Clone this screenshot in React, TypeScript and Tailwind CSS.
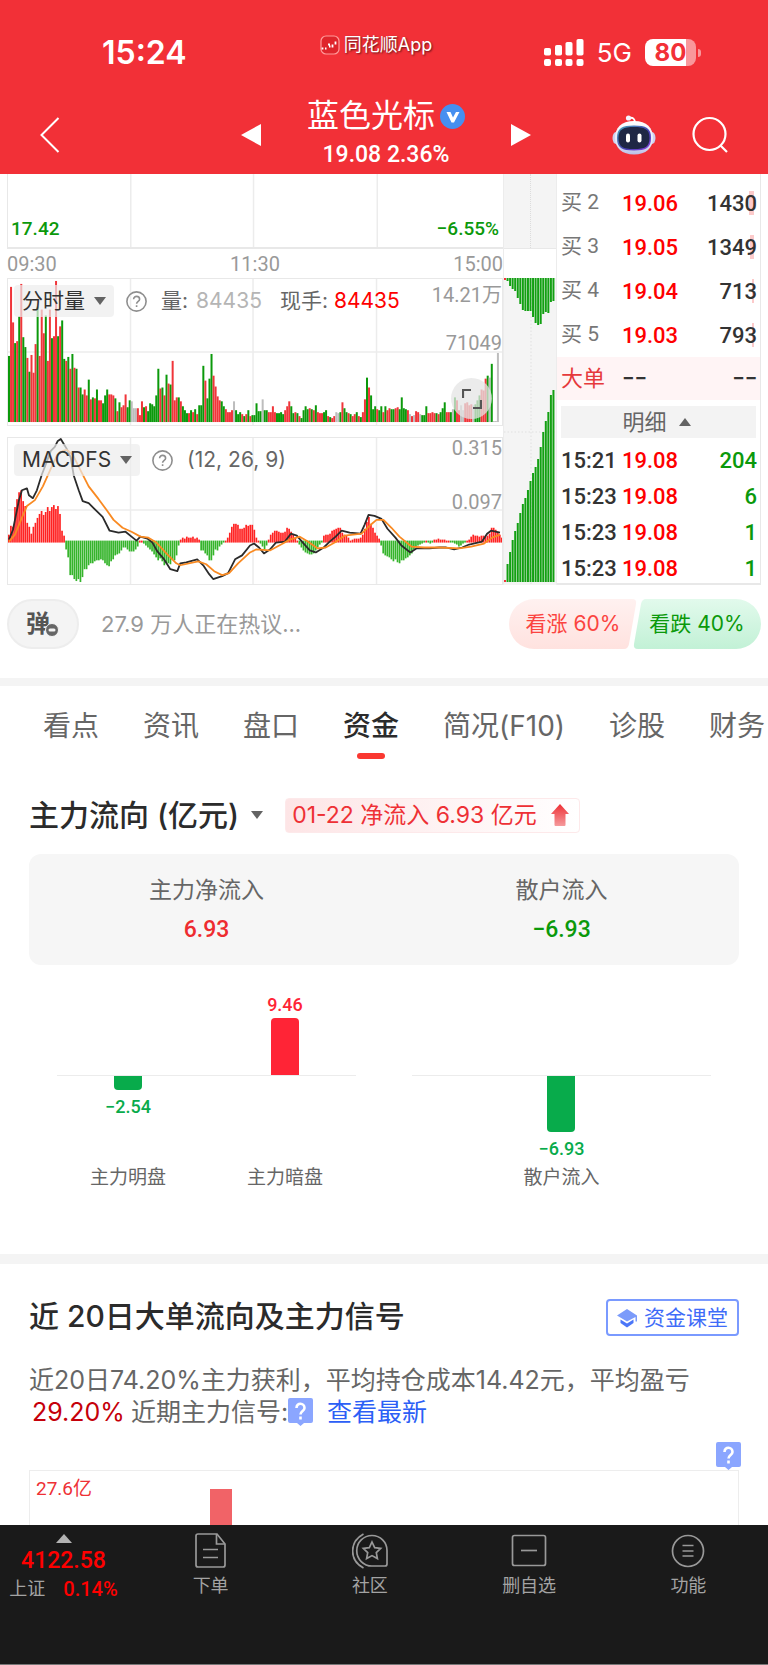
import type { ReactNode } from "react";

const volume =
  "g67 r137 r101 g80 r82 g107 r140 g86 g76 r65 g51 r68 r50 r79 g117 r67 r114 r90 g108 r62 r114 g85 r87 r143 g87 r97 g103 g64 r62 g66 r54 g69 r55 g54 r35 g35 g28 r33 r27 g43 " +
  "r23 g25 r24 g33 r22 r22 g19 g27 g33 r28 r28 r27 g24 r11 g20 r15 r17 r28 g15 g22 n21 n14 n14 r14 r7 r21 g15 r16 g11 g19 g18 g16 g27 g54 r34 g35 r27 g48 r39 g38 " +
  "r62 r22 r25 g25 r21 g16 g12 g9 r9 g12 r10 g13 r8 g17 g17 g57 r42 g24 g44 g69 r47 r36 r26 r22 g21 g16 r13 r10 r10 r12 n21 g12 g8 g10 r8 g6 r8 g12 r6 g7 " +
  "g7 g19 g11 g11 n23 g12 g12 r10 r10 r16 r10 g9 g9 g10 g8 r12 r16 r21 g16 g9 r10 g9 r6 g4 g12 g16 g13 r14 g13 r12 g17 r10 r9 r9 g10 g12 r6 g5 r4 r6 " +
  "n10 n9 g10 r20 g14 g10 r9 g8 r6 r8 g10 r6 g5 r10 r23 g45 r35 g27 g13 g16 r13 g12 g16 r10 g16 r12 r14 g13 g13 r14 r15 g13 g25 g14 g13 r12 n8 r6 n7 r11 " +
  "r10 n8 g7 g7 g16 r9 r9 r10 r9 g9 r8 g10 g14 g20 r10 r10 g10 n13 g25 r22 r12 n17 n12 r19 r20 r17 r18 n17 g18 g22 g27 r33 r32 r44 g47 n45 g59 n1 n1 n70";

const volumeColors: Record<string, string> = { g: "#0b990b", r: "#f0353a", n: "#bdbdbd" };

const macd = [
  7, 16, 15, 35, 43, 50, 52, 41, 36, 19, 15, 8, 15, 19, 24, 28, 31, 27, 30, 35, 31, 35, 37, 33, 36, 28, 11, 6, -8, -16,
  -34, -34, -38, -40, -38, -41, -36, -28, -28, -24, -22, -22, -20, -19, -19, -18, -19, -22, -24, -25, -20, -18, -14, -13, -12, -9, -6, -6, -8, -10,
  -10, -10, -8, -5, 1, 1, -2, -4, -6, -8, -10, -13, -16, -19, -17, -20, -24, -22, -22, -23, -18, -19, -14, -4, 2, 4, 3, 5, 4, 4,
  5, 3, 4, 2, -9, -9, -12, -14, -19, -19, -14, -8, -9, -5, -3, -1, 1, 4, 9, 15, 18, 18, 17, 13, 13, 14, 17, 16, 17, 17,
  12, 4, 1, -2, -5, -8, -4, 2, 7, 9, 11, 11, 10, 9, 9, 10, 14, 13, 10, 7, 4, 1, -3, -6, -9, -11, -12, -13, -13, -12,
  -9, -6, -3, -1, 6, 7, 7, 8, 11, 12, 13, 14, 14, 9, 7, 6, 4, 1, 2, 3, 3, 3, 4, 7, 13, 20, 25, 18, 14, 9,
  6, 3, -4, -12, -14, -15, -16, -18, -20, -18, -21, -22, -19, -19, -17, -16, -14, -12, -8, -5, -4, -3, -2, -1, 1, -1, -2, -1, 2, 2,
  3, 2, 2, 2, 1, 1, -1, -1, -2, -3, -5, -4, -2, -1, 1, 2, 5, 7, 6, 6, 5, 6, 6, 5, 6, 8, 14, 14, 12, 10, 7, 4,
];

const dif =
  "1,103 5,93 8,78 11,63 14,53 19,51 21,58 25,61 29,53 34,37 39,24 43,13 47,9 50,3 53,1 56,6 59,11 63,20 66,38 71,53 75,64 81,66 87,72 95,80 102,94 111,96 118,95 124,100 129,104 133,100 140,102 145,106 150,115 156,122 163,133 170,135 173,127 179,126 190,123 196,129 202,138 206,143 215,140 221,137 228,123 235,119 243,109 247,107 252,111 257,117 263,113 269,106 278,105 284,97 290,99 296,106 303,114 309,116 317,111 323,105 329,100 335,94 343,96 354,97 358,88 362,78 368,79 375,82 381,92 389,101 395,109 404,116 410,112 423,112 433,111 440,111 448,113 456,111 463,108 476,105 481,97 485,94 494,96";
const dea =
  "1,105 7,98 13,83 19,69 27,63 35,49 43,31 49,18 55,13 59,12 65,17 73,33 81,49 91,62 99,73 106,83 115,91 124,95 133,100 141,101 149,106 159,117 169,127 173,129 191,125 199,128 207,135 215,139 222,137 231,127 243,116 249,113 263,114 276,107 283,103 293,100 301,105 311,112 319,111 328,106 338,99 355,97 363,89 370,83 377,83 385,91 393,100 405,110 418,111 433,111 453,112 465,110 478,107 486,101 494,98";

const sideTop = [2, 3, 8, 11, 13, 20, 26, 32, 33, 33, 33, 39, 45, 47, 46, 36, 34, 35, 24, 23];
const sideBottom = [2, 18, 30, 42, 51, 59, 69, 78, 84, 92, 101, 109, 115, 123, 135, 150, 161, 170, 187, 192];

const bids = [
  { label: "买 2", price: "19.06", amount: "1430", bar: "w-[5px]" },
  { label: "买 3", price: "19.05", amount: "1349", bar: "w-1" },
  { label: "买 4", price: "19.04", amount: "713", bar: "w-0.5" },
  { label: "买 5", price: "19.03", amount: "793", bar: "w-0.5" },
];

const trades = [
  { time: "15:21", price: "19.08", amount: "204" },
  { time: "15:23", price: "19.08", amount: "6" },
  { time: "15:23", price: "19.08", amount: "1" },
  { time: "15:23", price: "19.08", amount: "1" },
];

const tabs = ["看点", "资讯", "盘口", "资金", "简况(F10)", "诊股", "财务"];

const NUM = "[font-family:Roboto,'Noto_Sans_CJK_SC',sans-serif]";

function StatusBar() {
  return (
    <div className="grid h-24 grid-cols-[1fr_auto_1fr] items-center pt-[9px]">
      <div className="pl-[102px] text-[32px] leading-9 font-semibold">15:24</div>
      <div className="mb-4 flex items-center gap-1 pr-4">
        <svg className="size-5" viewBox="0 0 20 20" fill="none">
          <rect x="1" y="1" width="18" height="18" rx="5" fill="#df252c" stroke="#ff9a9a" strokeWidth="1.2" />
          <path
            d="M2.5 12.5v2M5 13.5h1.5M8 9.5h2M9 11.5h1.5M12.5 9.5v3M15.5 6.5v3"
            stroke="#fff"
            strokeWidth="1.8"
          />
        </svg>
        <span className="text-[18px] leading-6 [text-shadow:1px_1px_2px_rgba(0,0,0,0.6)]">同花顺App</span>
      </div>
      <div className="flex items-center justify-end gap-[13px] pr-[67px]">
        <svg className="h-[27px] w-10" viewBox="0 0 40 27" fill="#fff">
          <rect x="0" y="9" width="7" height="7.5" rx="1.8" />
          <rect x="11" y="6" width="7" height="10.5" rx="1.8" />
          <rect x="21.5" y="3" width="7" height="13.5" rx="1.8" />
          <rect x="32.5" y="0" width="7" height="16.5" rx="1.8" />
          <rect x="0" y="20" width="7" height="7" rx="2" />
          <rect x="11" y="20" width="7" height="7" rx="2" />
          <rect x="21.5" y="20" width="7" height="7" rx="2" />
          <rect x="32.5" y="20" width="7" height="7" rx="2" />
        </svg>
        <span className="text-[26px] leading-8">5G</span>
        <div className="flex items-center gap-0.5">
          <div className="flex h-[27px] w-[51px] items-center justify-center rounded-[8px] bg-[linear-gradient(90deg,#fff_80%,#f9979b_80%)] text-2xl leading-7 font-bold text-[#f23037]">
            80
          </div>
          <div className="h-2 w-[3px] rounded-r-full bg-[#f9979b]" />
        </div>
      </div>
    </div>
  );
}

function Robot() {
  return (
    <svg className="h-10 w-11" viewBox="0 0 44 40">
      <defs>
        <linearGradient id="head" x1="0" y1="0" x2="0" y2="1">
          <stop offset="0" stopColor="#ffffff" />
          <stop offset="0.7" stopColor="#e3e6f6" />
          <stop offset="1" stopColor="#b9bde6" />
        </linearGradient>
        <linearGradient id="visor" x1="0" y1="0" x2="1" y2="1">
          <stop offset="0" stopColor="#48a7b8" />
          <stop offset="0.6" stopColor="#4a3fb5" />
          <stop offset="1" stopColor="#8c46e0" />
        </linearGradient>
      </defs>
      <path d="M17 3c4-1 6 1 6 5" stroke="#fff" strokeWidth="1.8" fill="none" />
      <circle cx="16.5" cy="3" r="2.6" fill="#f4f4ff" />
      <ellipse cx="4" cy="23" rx="3.5" ry="6" fill="#cdd2f0" />
      <ellipse cx="40" cy="23" rx="3.5" ry="6" fill="#cdd2f0" />
      <path d="M22 6c13 0 19 7 19 17S34 39.5 22 39.5 3 33 3 23 9 6 22 6z" fill="url(#head)" />
      <path d="M22 10.5c12 0 17 2.5 17 12.5S34 35.5 22 35.5 5 33 5 23s5-12.5 17-12.5z" fill="url(#visor)" />
      <path d="M22 12c10.500 0 15.500 2 15.500 11S33 34 22 34 6.500 32 6.500 23 11.500 12 22 12z" fill="#1f2745" />
      <rect x="14" y="18.5" width="4" height="9" rx="2" fill="#fff" />
      <rect x="25.5" y="18.5" width="4" height="9" rx="2" fill="#fff" />
    </svg>
  );
}

function Header() {
  return (
    <header className="bg-[#f23037] text-white">
      <StatusBar />
      <div className="grid h-[78px] grid-cols-[1fr_auto_1fr] items-center">
        <button className="ml-10 w-5" aria-label="返回">
          <svg className="h-9 w-5" viewBox="0 0 20 36" fill="none" stroke="#fff" strokeWidth="2">
            <path d="M18.5 1L1.5 18l17 17" />
          </svg>
        </button>
        <div className="flex items-center gap-[46px] pl-1">
          <button aria-label="上一只">
            <svg className="h-6 w-5" viewBox="0 0 20 24" fill="#fff">
              <path d="M20 1v22L0 12z" />
            </svg>
          </button>
          <div className="text-center">
            <h1 className="flex h-10 items-center gap-[5px] text-[32px] leading-10">
              蓝色光标
              <svg className="size-[25px]" viewBox="0 0 25 25">
                <circle cx="12.5" cy="12.5" r="12.5" fill="#468ff0" />
                <path d="M6.5 8h4l2.500 5.500L16 8h3.500L14 18.500h-2.500z" fill="#fff" />
              </svg>
            </h1>
            <p className={`${NUM} text-[23px] leading-[38px] font-medium`}>19.08 2.36%</p>
          </div>
          <button aria-label="下一只">
            <svg className="h-6 w-5" viewBox="0 0 20 24" fill="#fff">
              <path d="M0 1v22l20-11z" />
            </svg>
          </button>
        </div>
        <div className="flex items-center justify-end gap-9 pr-10">
          <button aria-label="问财">
            <Robot />
          </button>
          <button aria-label="搜索">
            <svg className="h-[38px] w-9" viewBox="0 0 36 38" fill="none" stroke="#fff" strokeWidth="2.2">
              <circle cx="17.5" cy="18" r="16" />
              <path d="M28.5 29.5L35 36" />
            </svg>
          </button>
        </div>
      </div>
    </header>
  );
}

function GridLines({ mid }: { mid?: number }) {
  return (
    <g stroke="#ececec" strokeWidth="1.5">
      <path d="M123 0v148M246 0v148M370 0v148" />
      {mid && <path d={`M0 ${mid}h496`} />}
    </g>
  );
}

function Caret({ up }: { up?: boolean }) {
  return (
    <svg className="h-2 w-3" viewBox="0 0 12 8" fill="#636363">
      <path d={up ? "M0 8h12L6 0z" : "M0 0h12L6 8z"} />
    </svg>
  );
}

function HelpIcon() {
  return (
    <svg className="size-[21px]" viewBox="0 0 21 21" fill="none" stroke="#8e8e8e" strokeWidth="1.6">
      <circle cx="10.5" cy="10.5" r="9.6" />
      <path d="M7.6 8.3c0-4 6-3.800 6 0 0 2.200-3 2-3 4.500M10.600 14.200v1.700" />
    </svg>
  );
}

function ChartTool({ name, children }: { name: string; children: ReactNode }) {
  return (
    <div className="absolute top-[6px] left-[6px] flex h-8 items-center text-[21px] leading-8 text-[#666]">
      <button className="flex h-8 items-center gap-[9px] rounded-[4px] bg-[#ececec]/70 px-2 text-[#333]">
        {name}
        <Caret />
      </button>
      <span className="mr-[14px] ml-3">
        <HelpIcon />
      </span>
      {children}
    </div>
  );
}

function Charts() {
  const axis = `${NUM} absolute right-0 text-xl leading-6 text-[#999]`;
  return (
    <div className="min-w-0 flex-1">
      <div className={`${NUM} relative h-[75px] border-b-2 border-l border-[#e8e8e8] text-[19px] leading-6 font-medium text-[#0b990b]`}>
        <svg className="absolute inset-0 size-full" viewBox="0 0 496 75" preserveAspectRatio="none">
          <GridLines />
        </svg>
        <span className="absolute bottom-1.5 left-[3px]">17.42</span>
        <span className="absolute right-1 bottom-1.5">−6.55%</span>
      </div>
      <div className={`${NUM} flex h-[29px] items-center justify-between text-xl leading-6 text-[#999]`}>
        <span>09:30</span>
        <span>11:30</span>
        <span>15:00</span>
      </div>

      <div className="relative h-[148px] border border-[#e8e8e8]">
        <svg className="absolute inset-0 size-full" viewBox="0 0 496 148" preserveAspectRatio="none">
          <GridLines mid={74} />
          {volume.split(" ").map((bar, i) => {
            const h = Number(bar.slice(1));
            return <rect key={i} x={i * 2.054} y={145 - h} width="2" height={h} fill={volumeColors[bar[0]]} />;
          })}
        </svg>
        <ChartTool name="分时量">
          <span>量:</span>
          <span className="ml-2 text-[#b5b5b5]">84435</span>
          <span className="ml-[18px]">现手:</span>
          <span className="ml-1.5 text-[#fe0000]">84435</span>
        </ChartTool>
        <span className={`${axis} top-1`}>14.21万</span>
        <span className={`${axis} top-[52px]`}>71049</span>
        <button
          aria-label="全屏"
          className="absolute right-2.5 bottom-[6px] flex size-[41px] items-center justify-center rounded-full bg-[#e4e4e4]/75"
        >
          <svg className="size-5" viewBox="0 0 20 20" fill="none" stroke="#555" strokeWidth="2.2">
            <path d="M1 9V1h8M19 11v8h-8" />
          </svg>
        </button>
      </div>

      <div className="relative mt-[11px] h-[148px] border border-[#e8e8e8]">
        <svg className="absolute inset-0 size-full" viewBox="0 0 496 148" preserveAspectRatio="none" fill="none">
          <GridLines mid={73} />
          {macd.map((v, i) => (
            <rect
              key={i}
              x={i * 2.054}
              y={v > 0 ? 105 - v : 104}
              width="1.7"
              height={Math.abs(v) + 1}
              fill={v > 0 ? "#ff2222" : "#35b42b"}
            />
          ))}
          <polyline points={dif} stroke="#2b2b2b" strokeWidth="1.8" strokeLinejoin="round" />
          <polyline points={dea} stroke="#f98a22" strokeWidth="1.8" strokeLinejoin="round" />
        </svg>
        <ChartTool name="MACDFS">
          <span>(12, 26, 9)</span>
        </ChartTool>
        <span className={`${axis} -top-0.5`}>0.315</span>
        <span className={`${axis} top-[52px]`}>0.097</span>
      </div>
    </div>
  );
}

function SideChart() {
  return (
    <div className="w-[54px] border-x border-[#ececec]">
      <div className="h-[75px] border-b border-[#e8e8e8] bg-[#f4f4f4]">
        <div className="mx-auto h-full w-px border-l border-dotted border-[#dcdcdc]" />
      </div>
      <div className="mt-[29px] h-[307px] bg-[#f4f4f4]">
        <svg className="size-full" viewBox="0 0 52 307" preserveAspectRatio="none">
          <path d="M27 0v307M0 154h52" stroke="#e0e0e0" strokeDasharray="1.5 2" />
          {sideTop.map((h, i) => (
            <rect key={i} x={i * 2.55} y="0" width="2" height={h} fill={i ? "#12a012" : "#f0353a"} />
          ))}
          {sideBottom.map((h, i) => (
            <rect key={i} x={i * 2.55} y={304 - h} width="2" height={h} fill={i ? "#12a012" : "#f0353a"} />
          ))}
        </svg>
      </div>
    </div>
  );
}

function OrderBook() {
  return (
    <div
      className={`${NUM} h-[411px] w-[204px] overflow-hidden border-r border-b-2 border-[#e8e8e8] text-[22px] font-medium text-[#333]`}
    >
      <table className="mt-[7px] w-full">
        <tbody>
          {bids.map((row) => (
            <tr key={row.label} className="h-11">
              <td className="w-[65px] pl-1 text-left text-[21px] font-normal text-[#777]">{row.label}</td>
              <td className="text-[#fe0000]">{row.price}</td>
              <td className="relative pr-[3px] text-right">
                <span className={`${row.bar} absolute top-2.5 right-1.5 h-6 bg-[#fccaca]`} />
                <span className="relative">{row.amount}</span>
              </td>
            </tr>
          ))}
          <tr className="h-[43px] bg-[#fff4f5]">
            <td className="pl-1 font-normal text-[#e6393c]">大单</td>
            <td>−−</td>
            <td className="pr-[3px] text-right">−−</td>
          </tr>
        </tbody>
      </table>
      <button className="mx-1 mt-[6px] mb-[5px] flex h-8 w-[195px] items-center justify-center gap-3 bg-[#f3f3f3] pr-1 text-[22px] font-normal text-[#666]">
        明细
        <Caret up />
      </button>
      <table className="w-full">
        <tbody>
          {trades.map((row, i) => (
            <tr key={i} className="h-9 leading-9">
              <td className="w-[65px] pl-1">{row.time}</td>
              <td className="text-[#fe0000]">{row.price}</td>
              <td className="pr-[3px] text-right text-[#0b990b]">{row.amount}</td>
            </tr>
          ))}
        </tbody>
      </table>
    </div>
  );
}

function Sentiment() {
  return (
    <div className="flex h-[93px] items-center justify-between px-[7px] pb-[15px]">
      <div className="flex items-center gap-[22px]">
        <button className="relative h-[50px] w-[72px] rounded-full border-2 border-[#ededed] bg-[#f4f4f4] pr-2.5 text-2xl leading-8 font-bold text-[#555]">
          弹
          <svg className="absolute right-[18px] bottom-2.5 size-[14px]" viewBox="0 0 14 14">
            <circle cx="7" cy="7" r="6.5" fill="#666" stroke="#f4f4f4" />
            <rect x="3.5" y="5.5" width="7" height="3" rx="1.5" fill="#f4f4f4" />
          </svg>
        </button>
        <span className="text-[22px] leading-8 text-[#999]">27.9 万人正在热议...</span>
      </div>
      <div className="flex">
        <button className="relative h-[50px] w-[128px] text-[21px] text-[#fb4440]">
          <svg className="absolute inset-0 size-full" viewBox="0 0 128 50">
            <defs>
              <linearGradient id="rise" x1="0" y1="0" x2="0" y2="1">
                <stop offset="0" stopColor="#fff1f0" />
                <stop offset="1" stopColor="#ffe2df" />
              </linearGradient>
            </defs>
            <path d="M25 0h98q5 0 4 5l-7 40q-1 5-5 5H25a25 25 0 0 1 0-50z" fill="url(#rise)" />
          </svg>
          <span className="relative">看涨 60%</span>
        </button>
        <button className="relative -ml-1 h-[50px] w-[128px] text-[21px] text-[#0b990b]">
          <svg className="absolute inset-0 size-full" viewBox="0 0 128 50">
            <defs>
              <linearGradient id="fall" x1="0" y1="0" x2="0" y2="1">
                <stop offset="0" stopColor="#e2faec" />
                <stop offset="1" stopColor="#c2f1d6" />
              </linearGradient>
            </defs>
            <path d="M13 0h90a25 25 0 0 1 0 50H5q-5 0-4-5L8 5q1-5 5-5z" fill="url(#fall)" />
          </svg>
          <span className="relative">看跌 40%</span>
        </button>
      </div>
    </div>
  );
}

function Tabs() {
  return (
    <nav className="flex h-20 gap-11 overflow-hidden pl-[43px] text-[28px] leading-10 whitespace-nowrap text-[#666]">
      {tabs.map((tab) => (
        <button
          key={tab}
          className={
            tab === "资金"
              ? "flex flex-col items-center pt-5 font-medium text-[#2b2b2b]"
              : "flex flex-col items-center pt-5"
          }
        >
          {tab}
          {tab === "资金" && <span className="mt-[7px] h-1.5 w-7 rounded-full bg-[#fa3831]" />}
        </button>
      ))}
    </nav>
  );
}

type FlowBarProps = { name: string; value: string; height: number; up?: boolean };

function FlowBar({ name, value, height, up }: FlowBarProps) {
  return (
    <div className={`${NUM} flex w-20 flex-col items-center text-[19px] leading-6 text-[#666]`}>
      <div className="flex h-[84px] flex-col items-center justify-end gap-[1px]">
        {up && (
          <>
            <span className="text-lg leading-6 font-medium text-[#ff2436]">{value}</span>
            <span className="w-7 rounded-t-[4px] bg-[#ff2436]" style={{ height }} />
          </>
        )}
      </div>
      <div className="flex h-[91px] flex-col items-center gap-[5px]">
        {!up && (
          <>
            <span className="w-7 rounded-b-[4px] bg-[#08ab4b]" style={{ height }} />
            <span className="text-lg leading-6 font-medium text-[#08ab4b]">{value}</span>
          </>
        )}
      </div>
      <span>{name}</span>
    </div>
  );
}

function FundFlow() {
  return (
    <section className="px-[29px] pt-[29px]">
      <div className="flex h-10 items-center">
        <h2 className="flex items-center gap-3 text-[30px] leading-10 font-medium text-[#2b2b2b]">
          主力流向 (亿元)
          <Caret />
        </h2>
        <div className="ml-[22px] flex h-[35px] items-center gap-3.5 rounded-[4px] border border-[#fde9ea] bg-gradient-to-r from-[#fde5e6] to-white pr-2.5 pl-1.5 text-[23px] leading-8 text-[#ee3035]">
          01-22 净流入 6.93 亿元
          <svg className="h-[22px] w-[18px]" viewBox="0 0 18 22">
            <defs>
              <linearGradient id="up" x1="0" y1="0" x2="0" y2="1">
                <stop offset="0" stopColor="#ee3035" />
                <stop offset="1" stopColor="#f59a9c" />
              </linearGradient>
            </defs>
            <path d="M9 0l9 10h-3.500v11q0 1-1 1h-9q-1 0-1-1V10H0z" fill="url(#up)" />
          </svg>
        </div>
      </div>

      <div className="mt-[19px] grid h-[111px] grid-cols-2 rounded-xl bg-[#f6f6f6] pt-4 text-center text-[23px] leading-10 text-[#666]">
        <div>
          <p>主力净流入</p>
          <p className={`${NUM} font-medium text-[#ee2c30]`}>6.93</p>
        </div>
        <div>
          <p>散户流入</p>
          <p className={`${NUM} font-medium text-[#0b990b]`}>−6.93</p>
        </div>
      </div>

      <div className="mt-[26px] grid h-[263px] grid-cols-2">
        <div className="relative mx-7 flex justify-between px-[31px]">
          <div className="absolute inset-x-0 top-[84px] h-px bg-[#ececec]" />
          <FlowBar name="主力明盘" value="−2.54" height={15} />
          <FlowBar name="主力暗盘" value="9.46" height={57} up />
        </div>
        <div className="relative mx-7 flex justify-center">
          <div className="absolute inset-x-0 top-[84px] h-px bg-[#ececec]" />
          <FlowBar name="散户流入" value="−6.93" height={57} />
        </div>
      </div>
    </section>
  );
}

function HelpTag() {
  return (
    <svg className="h-7 w-[25px]" viewBox="0 0 25 28">
      <path d="M2 0h21q2 0 2 2v21q0 2-2 2h-7l-3.500 3L9 25H2q-2 0-2-2V2q0-2 2-2z" fill="#8ba6ff" />
      <path d="M8.500 10c0-6 8-5.500 8 0 0 3-4 3-4 6.500M12.500 18.500v3" fill="none" stroke="#fff" strokeWidth="2.6" />
    </svg>
  );
}

function Signals() {
  return (
    <section className="px-[29px] pt-8">
      <div className="flex h-10 items-center justify-between">
        <h2 className="text-[30px] leading-10 font-medium text-[#2b2b2b]">近 20日大单流向及主力信号</h2>
        <button className="mt-[3px] flex h-[37px] items-center gap-[7px] rounded-[4px] border-2 border-[#7a9aff] px-[9px] text-[21px] leading-8 text-[#3f6cf8]">
          <svg className="size-5" viewBox="0 0 20 20">
            <path d="M10 1l10 6.500v6h-1.500V9L10 13.500 0 7.500z" fill="#7b9bfa" />
            <path d="M3.500 11.500l6.500 4 6.500-4V15L10 19.500 3.500 15z" fill="#4b76f8" />
          </svg>
          资金课堂
        </button>
      </div>
      <div className="mt-7 text-[25px] leading-8 text-[#666]">
        <p className="whitespace-nowrap">近20日74.20%主力获利，平均持仓成本14.42元，平均盈亏</p>
        <p className="flex items-center">
          <span className="ml-[3px] text-[#c5000a]">29.20%</span>
          <span className="ml-1.5">近期主力信号:</span>
          <HelpTag />
          <a href="#latest" className="ml-3.5 text-[#2c5ff6]">
            查看最新
          </a>
        </p>
      </div>
      <div className="mt-[14px] -mr-0.5 flex justify-end">
        <HelpTag />
      </div>
      <div className="flex h-[55px] overflow-hidden border border-b-0 border-[#ededed]">
        <span className={`${NUM} mt-[6px] ml-1.5 w-[174px] text-[19px] leading-6 text-[#ee3035]`}>27.6亿</span>
        <span className="mt-[18px] h-9 w-[22px] bg-[#f16367]" />
      </div>
    </section>
  );
}

const navItems = [
  {
    label: "下单",
    icon: (
      <>
        <path d="M3 3q0-2 2-2h19l8 10v21q0 2-2 2H5q-2 0-2-2z" />
        <path d="M23.500 1v10H32M10 16.500h15M10 24.500h15" />
      </>
    ),
  },
  {
    label: "社区",
    icon: (
      <>
        <path d="M20 2.500a15 15 0 0 1 15 15V31q0 2-2 2H20a15 15 0 0 1 0-30.500zM11.500 1C-3 9-3 27 11.500 35" />
        <path d="M20 9l2.700 5.600 6 .8-4.400 4.200 1.100 6-5.400-3-5.400 3 1.100-6-4.400-4.200 6-.8z" />
      </>
    ),
  },
  {
    label: "删自选",
    icon: (
      <>
        <rect x="1.5" y="2.5" width="33" height="30" rx="2" />
        <path d="M10 17.500h16" />
      </>
    ),
  },
  {
    label: "功能",
    icon: (
      <>
        <circle cx="18" cy="18" r="15.5" />
        <path d="M12.500 12.500h11M12.500 18h11M12.500 23h11" />
      </>
    ),
  },
];

function BottomNav() {
  return (
    <nav className="flex h-[140px] border-b border-[#777] bg-[#1a1a1a] text-lg leading-6 text-[#a3a3a3]">
      <button className={`${NUM} flex w-[131px] flex-col items-center pt-[9px] pr-1`}>
        <svg className="h-[9px] w-4" viewBox="0 0 16 9" fill="#b3b3b3">
          <path d="M0 9h16L8 0z" />
        </svg>
        <span className="mt-1 text-[23px] leading-7 font-medium text-[#fe0000]">4122.58</span>
        <span className="flex items-center gap-[18px] text-lg leading-7">
          上证<span className="text-xl font-medium text-[#fe0000]">0.14%</span>
        </span>
      </button>
      {navItems.map((item) => (
        <button key={item.label} className="flex flex-1 flex-col items-center pt-2">
          <svg className="size-9" viewBox="0 0 36 36" fill="none" stroke="#999" strokeWidth="1.7">
            {item.icon}
          </svg>
          <span className="mt-[5px]">{item.label}</span>
        </button>
      ))}
    </nav>
  );
}

export default function App() {
  return (
    <div className="w-full overflow-hidden bg-white [font-family:Inter,'Noto_Sans_CJK_SC',sans-serif]">
      <Header />
      <div className="flex px-[7px]">
        <Charts />
        <SideChart />
        <OrderBook />
      </div>
      <Sentiment />
      <div className="h-2 bg-[#f4f4f4]" />
      <Tabs />
      <FundFlow />
      <div className="h-2.5 bg-[#f4f4f4]" />
      <Signals />
      <BottomNav />
    </div>
  );
}
